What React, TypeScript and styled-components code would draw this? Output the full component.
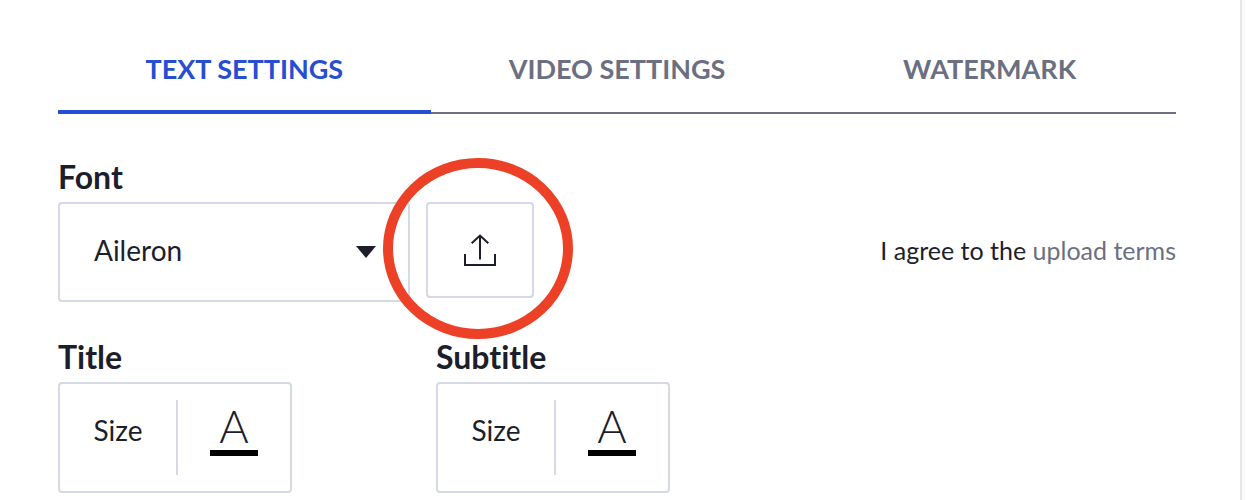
import React from "react";
import styled, { createGlobalStyle } from "styled-components";

const ink = "#1c1e2c";
const muted = "#6b6f81";
const line = "#d5d8e5";
const blue = "#264dd2";

const GlobalStyle = createGlobalStyle`
  *, *::before, *::after { box-sizing: border-box; }
  body {
    margin: 0;
    background: #fafafa;
    color: ${ink};
    font-family: Lato, "Liberation Sans", sans-serif;
    font-variant-ligatures: none;
  }
  button, select { font: inherit; color: inherit; margin: 0; }
`;

const Panel = styled.main`
  min-height: 100vh;
  margin-right: 4px;
  padding: 0 64px 7px 58px;
  background: #fff;
  border-right: 2px solid #e6e6e6;
`;

const Tabs = styled.div`
  display: grid;
  grid-template-columns: repeat(3, 1fr);
  margin-bottom: 38px;
  background: linear-gradient(${muted}, ${muted}) bottom / 100% 2px no-repeat;
`;

const Tab = styled.button<{ $active?: boolean }>`
  padding: 49px 0 21px;
  border: 0;
  border-bottom: 4px solid ${(p) => (p.$active ? blue : "transparent")};
  background: none;
  color: ${(p) => (p.$active ? blue : muted)};
  font-size: 27px;
  font-weight: 700;
  line-height: 40px;
`;

const labelStyle = `
  display: block;
  margin: 0;
  font-size: 32px;
  font-weight: 700;
  line-height: 50px;
`;

const FieldLabel = styled.label`
  ${labelStyle}
`;

const GroupTitle = styled.h2`
  ${labelStyle}
`;

const FontRow = styled.div`
  display: flex;
  align-items: flex-start;
  gap: 16px;
  margin-bottom: 30px;
`;

const SelectWrap = styled.div`
  position: relative;
  flex: 0 0 352px;
`;

const FontSelect = styled.select`
  display: block;
  width: 100%;
  height: 100px;
  padding: 0 64px 4px 34px;
  appearance: none;
  border: 2px solid ${line};
  border-radius: 4px;
  background: #fff;
  font-size: 28px;
`;

const Arrow = styled.svg`
  position: absolute;
  top: 44px;
  right: 34px;
  pointer-events: none;
`;

const UploadWrap = styled.div`
  position: relative;
`;

const UploadButton = styled.button`
  display: grid;
  place-items: center;
  width: 108px;
  height: 96px;
  padding: 0;
  border: 2px solid ${line};
  border-radius: 4px;
  background: #fff;
`;

const Highlight = styled.svg`
  position: absolute;
  top: -44px;
  left: -43px;
  z-index: 1;
  pointer-events: none;
`;

const Terms = styled.p`
  flex: 1;
  margin: 0;
  font-size: 25px;
  line-height: 96px;
  text-align: right;
`;

const TermsLink = styled.a`
  color: ${muted};
  text-decoration: none;
`;

const Groups = styled.div`
  display: grid;
  grid-template-columns: repeat(3, 1fr);
  gap: 16px;
`;

const StyleBox = styled.div`
  display: flex;
  width: 234px;
  height: 111px;
  padding: 16px 0;
  border: 2px solid ${line};
  border-radius: 4px;
`;

const SizeButton = styled.button`
  width: 118px;
  padding: 0 0 16px;
  border: 0;
  border-right: 2px solid ${line};
  background: none;
  font-size: 28px;
`;

const ColorButton = styled.button`
  display: flex;
  flex: 1;
  flex-direction: column;
  align-items: center;
  padding: 2px 0 0;
  border: 0;
  background: none;
`;

const Letter = styled.span`
  font-size: 45px;
  font-weight: 300;
  line-height: 48px;
`;

const Swatch = styled.span`
  width: 48px;
  height: 6px;
  background: #000;
`;

function TextStyle({ name }: { name: string }) {
  return (
    <section>
      <GroupTitle>{name}</GroupTitle>
      <StyleBox>
        <SizeButton type="button">Size</SizeButton>
        <ColorButton type="button" aria-label={`${name} color`}>
          <Letter>A</Letter>
          <Swatch />
        </ColorButton>
      </StyleBox>
    </section>
  );
}

export default function App() {
  return (
    <>
      <GlobalStyle />
      <Panel>
        <Tabs role="tablist">
          <Tab type="button" role="tab" aria-selected="true" $active>TEXT SETTINGS</Tab>
          <Tab type="button" role="tab" aria-selected="false">VIDEO SETTINGS</Tab>
          <Tab type="button" role="tab" aria-selected="false">WATERMARK</Tab>
        </Tabs>
        <FieldLabel htmlFor="font">Font</FieldLabel>
        <FontRow>
          <SelectWrap>
            <FontSelect id="font" defaultValue="Aileron">
              <option>Aileron</option>
            </FontSelect>
            <Arrow width="20" height="12" viewBox="0 0 20 12" aria-hidden="true">
              <path d="M0 0H20L10 12Z" fill={ink} />
            </Arrow>
          </SelectWrap>
          <UploadWrap>
            <UploadButton type="button" aria-label="Upload font">
              <svg width="32" height="32" viewBox="0 0 32 32" fill="none" stroke={ink} strokeWidth="2" aria-hidden="true">
                <path d="M1 20V31H31V20" />
                <path d="M16 25.500V1.500M7.700 9.300L16 1.500L24.300 9.300" />
              </svg>
            </UploadButton>
            <Highlight width="190" height="181" viewBox="0 0 190 181" fill="none" aria-hidden="true">
              <ellipse cx="95" cy="90.500" rx="90" ry="85.500" stroke="#ec4127" strokeWidth="10" />
            </Highlight>
          </UploadWrap>
          <Terms>
            I agree to the <TermsLink href="#terms">upload terms</TermsLink>
          </Terms>
        </FontRow>
        <Groups>
          <TextStyle name="Title" />
          <TextStyle name="Subtitle" />
        </Groups>
      </Panel>
    </>
  );
}
